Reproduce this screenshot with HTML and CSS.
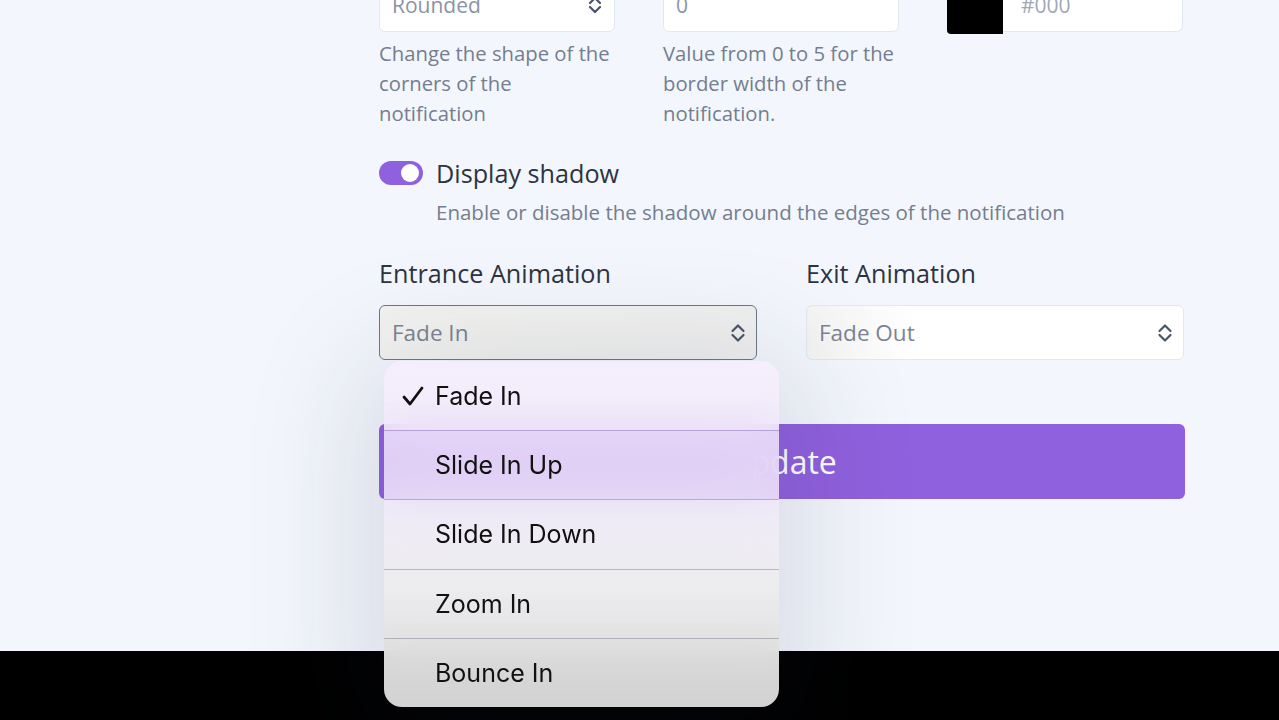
FILE: index.html
```html
<!DOCTYPE html>
<html lang="en">
<head>
<meta charset="utf-8">
<title>Notification settings</title>
<link rel="stylesheet" href="styles.css">
</head>
<body>
<main class="page">
  <div class="form">
    <div class="row3">
      <div class="field">
        <div class="select">
          <span>Rounded</span>
          <svg class="chev" width="14" height="18" viewBox="0 0 14 18"><path d="M2 7l5-5 5 5M2 11l5 5 5-5" fill="none" stroke="#4a5568" stroke-width="2.2" stroke-linecap="round" stroke-linejoin="round"/></svg>
        </div>
        <p class="help">Change the shape of the corners of the notification</p>
      </div>
      <div class="field">
        <div class="input"><span>0</span></div>
        <p class="help">Value from 0 to 5 for the border width of the notification.</p>
      </div>
      <div class="field">
        <div class="color">
          <div class="swatch"></div>
          <div class="colorval"><span>#000</span></div>
        </div>
      </div>
    </div>

    <div class="toggle-row">
      <div class="toggle"><div class="knob"></div></div>
      <div class="toggle-text">
        <div class="toggle-label">Display shadow</div>
        <p class="help">Enable or disable the shadow around the edges of the notification</p>
      </div>
    </div>

    <div class="row2">
      <div class="field">
        <label class="label">Entrance Animation</label>
        <div class="select big focused">
          <span>Fade In</span>
          <svg class="chev" width="16" height="20" viewBox="0 0 16 20"><path d="M2.5 8l5.5-5.5 5.5 5.5M2.5 12l5.5 5.5 5.5-5.5" fill="none" stroke="#4a5568" stroke-width="2.2" stroke-linecap="round" stroke-linejoin="round"/></svg>
        </div>
      </div>
      <div class="field">
        <label class="label">Exit Animation</label>
        <div class="select big">
          <span>Fade Out</span>
          <svg class="chev" width="16" height="20" viewBox="0 0 16 20"><path d="M2.5 8l5.5-5.5 5.5 5.5M2.5 12l5.5 5.5 5.5-5.5" fill="none" stroke="#4a5568" stroke-width="2.2" stroke-linecap="round" stroke-linejoin="round"/></svg>
        </div>
      </div>
    </div>

    <button class="btn">Update</button>
  </div>
</main>
<footer class="bar"></footer>

<div class="menu">
  <div class="opt"><svg class="check" width="22" height="20" viewBox="0 0 22 20"><path d="M2 11l6 7L20 2" fill="none" stroke="#111" stroke-width="2.8" stroke-linecap="round" stroke-linejoin="round"/></svg>Fade In</div>
  <div class="opt">Slide In Up</div>
  <div class="opt">Slide In Down</div>
  <div class="opt">Zoom In</div>
  <div class="opt">Bounce In</div>
</div>
</body>
</html>
```

FILE: styles.css
```css
* { box-sizing: border-box; }
html, body { margin: 0; padding: 0; }
body {
  width: 1279px;
  height: 720px;
  overflow: hidden;
  background: #000;
  font-family: "Open Sans", "Noto Sans", sans-serif;
  position: relative;
}
.page {
  height: 651px;
  background: #f3f6fc;
  overflow: hidden;
}
.form {
  width: 806px;
  margin-left: 379px;
  margin-top: -23px;
  display: flex;
  flex-direction: column;
}
.row3 {
  display: grid;
  grid-template-columns: 236px 236px 236px;
  column-gap: 48px;
}
.field { display: flex; flex-direction: column; }
.select, .input, .colorval {
  height: 55px;
  background: #fff;
  border: 1px solid #e2e8f0;
  border-radius: 6px;
  display: flex;
  align-items: center;
  padding: 0 12px;
  font-size: 21px;
  color: #8a94a6;
}
.select { justify-content: space-between; }
.select .chev { flex: none; margin-right: 0; }
.help {
  margin: 6px 0 0;
  font-size: 20.3px;
  line-height: 30px;
  color: #747e8f;
}
.color { display: flex; height: 57px; }
.swatch {
  width: 56px;
  height: 57px;
  background: #000;
  border-radius: 0 0 0 4px;
  flex: none;
}
.colorval {
  flex: 1;
  border-left: none;
  border-radius: 0 6px 6px 0;
  padding-left: 18px;
  color: #a0a8b6;
}
.toggle-row {
  margin-top: 27px;
  display: flex;
  gap: 13px;
}
.toggle {
  width: 44px;
  height: 24px;
  margin-top: 6px;
  border-radius: 12px;
  background: #9061de;
  position: relative;
  flex: none;
}
.knob {
  position: absolute;
  right: 4px;
  top: 3px;
  width: 18px;
  height: 18px;
  border-radius: 50%;
  background: #fff;
}
.toggle-label {
  font-size: 25.2px;
  line-height: 36px;
  color: #2d3441;
}
.toggle-text .help { margin-top: 6px; font-size: 20.5px; }
.row2 {
  margin-top: 28px;
  display: grid;
  grid-template-columns: 378px 378px;
  column-gap: 49px;
}
.label {
  font-size: 25.2px;
  line-height: 36px;
  color: #2d3441;
  margin-bottom: 14px;
}
.select.big { font-size: 22.5px; color: #7b8494; padding-right: 10px; }
.select.focused {
  border-color: #6f7785;
  background: linear-gradient(90deg, #f3f3f1, #f0f0f0);
}
.row2 .field:last-child .select {
  background: linear-gradient(90deg, #f4f4f4, #fff 30%);
}
.btn {
  margin-top: 64px;
  height: 75px;
  border: none;
  border-radius: 6px;
  background: #9061de;
  color: #fff;
  font-family: "Open Sans", sans-serif;
  font-size: 32px;
  padding: 0;
}
.bar { height: 69px; background: #000; }

.menu {
  position: absolute;
  left: 384px;
  top: 361px;
  width: 395px;
  height: 346px;
  border-radius: 18px;
  overflow: hidden;
  background: linear-gradient(180deg, rgba(244,236,252,0.86) 0%, rgba(240,234,248,0.88) 40%, rgba(236,236,238,0.96) 65%, rgba(214,214,214,0.98) 100%);
  backdrop-filter: blur(20px);
  box-shadow: 0 20px 120px 25px rgba(30,40,70,0.13);
  font-family: Inter, "Liberation Sans", sans-serif;
}
.opt {
  height: 69.2px;
  display: flex;
  align-items: center;
  padding-left: 51px;
  font-size: 25px;
  color: #111;
  position: relative;
  border-top: 1px solid rgba(120,110,130,0.45);
}
.opt:first-child { border-top: none; }
.opt:nth-child(2) { background: rgba(210,180,245,0.25); border-color: rgba(140,110,180,0.5); }
.opt:nth-child(3) { border-color: rgba(140,110,180,0.5); }
.check {
  position: absolute;
  left: 18px;
  top: 25px;
}
```
